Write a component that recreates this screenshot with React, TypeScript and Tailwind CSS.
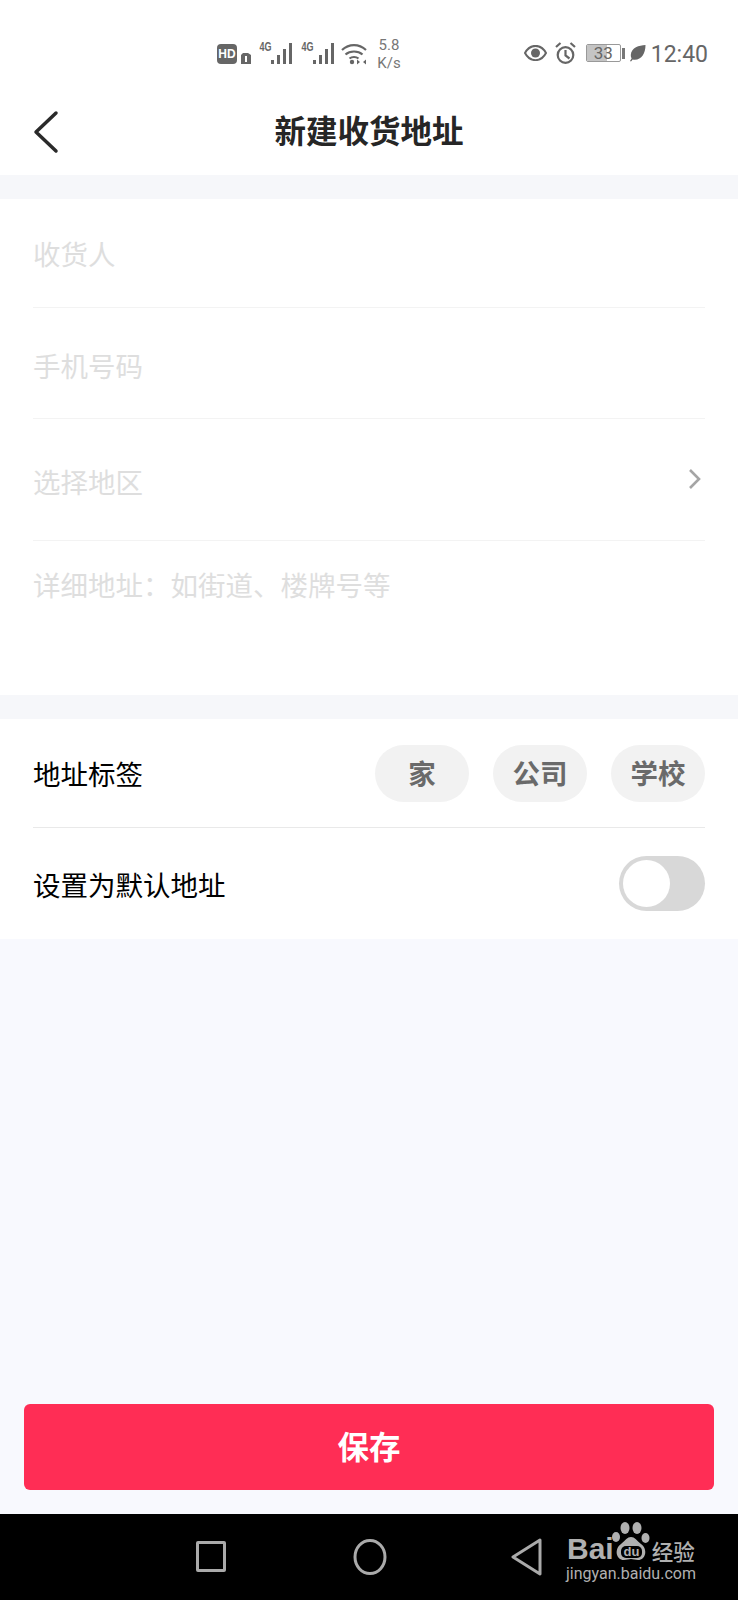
const cjk = '"Noto Sans CJK SC", "Liberation Sans", sans-serif'

const Signal = ({ className }: { className: string }) => (
  <div className={`flex items-start ${className}`}>
    <span className="w-[12px] origin-top scale-x-[0.9] scale-y-[1.35] text-[10px] leading-[8px] font-bold whitespace-nowrap text-[#666]" style={{ fontFamily: '"Liberation Sans", sans-serif' }}>4G</span>
    <svg width="22" height="22" viewBox="0 0 22 22" fill="#666">
      <rect x="0" y="18" width="3" height="4" />
      <rect x="6" y="13" width="3" height="9" />
      <rect x="12" y="7" width="3" height="15" />
      <rect x="18" y="1" width="3" height="21" />
    </svg>
  </div>
)

const StatusBar = () => (
  <div className="flex h-[90px] items-start pt-[38px] text-[#666]">
    <div className="ml-[217px] flex items-start">
      <div className="mt-[6px] flex h-[20px] w-[20px] items-center justify-center rounded-[4px] bg-[#666] text-[12px] leading-none font-bold text-white" style={{ fontFamily: '"Liberation Sans", sans-serif' }}>HD</div>
      <svg width="10" height="11" viewBox="0 0 10 11" className="mt-[15px] ml-[4px]">
        <path d="M2 0h5l3 2v9H0V2z" fill="#666" />
        <rect x="4" y="3" width="2" height="6" fill="#fff" />
      </svg>
      <Signal className="mt-[4px] ml-[8px]" />
      <Signal className="mt-[4px] ml-[8px]" />
      <svg width="26" height="22" viewBox="0 0 26 22" className="mt-[5px] ml-[6px]" fill="none" stroke="#666" strokeWidth="2.200">
        <path d="M1 7c7-6.500 17-6.500 24 0" />
        <path d="M4.500 11.500c4.500-4 12.500-4 17 0" />
        <path d="M8.500 15.500c2.500-2 6.500-2 9 0" />
        <circle cx="11" cy="19" r="2.200" fill="#666" stroke="none" />
        <path d="M16 16.500 19 19l-3 2.500zM25 16.500 22 19l3 2.500z" fill="#666" stroke="none" />
      </svg>
      <div className="-mt-[2px] ml-[10px] w-[24px] text-center text-[15px] leading-[18px] whitespace-nowrap text-[#777]" style={{ fontFamily: 'Roboto, sans-serif' }}>
        5.8<br />K/s
      </div>
    </div>
    <div className="ml-auto mr-[30px] flex items-start">
      <svg width="23" height="16" viewBox="0 0 23 16" className="mt-[7px]">
        <path d="M1 8c5-9.500 16-9.500 21 0-5 9.500-16 9.500-21 0z" fill="none" stroke="#666" strokeWidth="2" />
        <circle cx="11.500" cy="8" r="4.500" fill="#666" />
      </svg>
      <svg width="21" height="22" viewBox="0 0 21 22" className="mt-[4px] ml-[8px]" fill="none" stroke="#666" strokeWidth="2.200">
        <circle cx="10.500" cy="13" r="7.800" />
        <path d="M10.500 8v5.500l4 3" />
        <path d="M1 5l4.500-4M20 5l-4.500-4" />
      </svg>
      <div className="relative mt-[6px] ml-[10px] flex h-[18px] w-[35px] items-center overflow-hidden rounded-[2px] border border-[#999]">
        <div className="h-full w-[20px] bg-[#c4c4c4]" />
        <span className="absolute inset-x-0 text-center text-[17px] leading-[16px] text-[#666]" style={{ fontFamily: 'Roboto, sans-serif' }}>33</span>
      </div>
      <div className="mt-[10px] ml-[1px] h-[11px] w-[3px] bg-[#777]" />
      <svg width="16" height="17" viewBox="0 0 16 17" className="mt-[7px] ml-[5px]">
        <path d="M15.500 0C9 .5 1.500 2 .8 10c-.1 1.300.2 2.500.8 3.500L0 16l1 .6 1.700-2C11 16 15.500 9 15.500 0z" fill="#666" />
      </svg>
      <span className="mt-[6px] ml-[5px] text-[23px] leading-[22px] text-[#666]" style={{ fontFamily: 'Roboto, sans-serif' }}>12:40</span>
    </div>
  </div>
)

const FieldRow = ({ label, rowClass, divider, arrow }: { label: string; rowClass: string; divider: boolean; arrow?: boolean }) => (
  <div className={`mx-[33px] flex justify-between ${rowClass} ${divider ? 'border-b border-[#f3f3f3]' : ''}`}>
    <span className="text-[27.5px] leading-[40px] text-[#dedede]">{label}</span>
    {arrow && (
      <svg width="14" height="22" viewBox="0 0 14 22" fill="none" stroke="#a5a5a5" strokeWidth="2.600" className="mr-[3px] -mt-[3px]">
        <path d="M2 2l9 9-9 9" />
      </svg>
    )}
  </div>
)

const Chip = ({ children }: { children: string }) => (
  <div className="flex h-[57px] w-[94px] items-center justify-center rounded-full bg-[#f2f2f2] text-[27.5px] font-bold text-[#6a6a6a]">{children}</div>
)

export default function App() {
  return (
    <div className="flex h-[1600px] w-[738px] flex-col overflow-hidden bg-[#f8f9fe]" style={{ fontFamily: cjk }}>
      <div className="bg-white">
        <StatusBar />
        <div className="relative flex h-[85px] items-center justify-center pb-[5px]">
          <svg width="26" height="44" viewBox="0 0 26 44" fill="none" stroke="#2a2a2a" strokeWidth="3.500" strokeLinecap="round" strokeLinejoin="round" className="absolute left-[33px] top-[20px]">
            <path d="M23 3 3 22l20 19" />
          </svg>
          <span className="text-[31.5px] leading-none font-bold text-[#262626]">新建收货地址</span>
        </div>
      </div>

      <div className="h-[24px] bg-[#f6f7fa]" />

      <div className="h-[496px] bg-white">
        <FieldRow label="收货人" rowClass="h-[109px] items-center" divider />
        <FieldRow label="手机号码" rowClass="h-[111px] items-center pt-[3px]" divider />
        <FieldRow label="选择地区" rowClass="h-[122px] items-center pt-[2px]" divider arrow />
        <FieldRow label="详细地址：如街道、楼牌号等" rowClass="items-start pt-[23px]" divider={false} />
      </div>

      <div className="h-[24px] bg-[#f6f7fa]" />

      <div className="h-[220px] bg-white">
        <div className="mx-[33px] flex h-[109px] items-center justify-between border-b border-[#e9e9e9]">
          <span className="mt-[1px] text-[27.5px] text-black">地址标签</span>
          <div className="flex gap-[24px]">
            <Chip>家</Chip>
            <Chip>公司</Chip>
            <Chip>学校</Chip>
          </div>
        </div>
        <div className="mx-[33px] flex h-[110px] items-center justify-between">
          <span className="mt-[3px] text-[27.5px] text-black">设置为默认地址</span>
          <div className="flex h-[55px] w-[86px] items-center rounded-full bg-[#d8d8d8] pl-[4px]">
            <div className="h-[47px] w-[47px] rounded-full bg-white" />
          </div>
        </div>
      </div>

      <div className="flex-1" />

      <div className="mx-[24px] mb-[24px] flex h-[86px] items-center justify-center rounded-[6px] bg-[#ff2d55] pb-[3px] text-[31.5px] font-bold text-white">保存</div>

      <div className="relative flex h-[86px] items-center bg-black">
        <div className="ml-[196px] mt-[-1px] h-[31px] w-[30px] rounded-[2px] border-[3px] border-[#aaa]" />
        <svg width="34" height="38" viewBox="0 0 34 38" fill="none" stroke="#aaa" strokeWidth="3" className="ml-[127px]">
          <ellipse cx="17" cy="19" rx="15" ry="16.500" />
        </svg>
        <svg width="32" height="38" viewBox="0 0 32 38" fill="none" stroke="#aaa" strokeWidth="3" strokeLinejoin="round" className="ml-[124px]">
          <path d="M29 2 2 19l27 17z" />
        </svg>
        <div className="absolute top-[8px] left-[566px] text-[#b0b0b0]">
          <div className="flex h-[38px] items-end">
            <span className="ml-[1px] text-[30px] leading-[22px] font-bold" style={{ fontFamily: '"Liberation Sans", sans-serif' }}>Bai</span>
            <svg width="38" height="38" viewBox="0 0 38 38" fill="#b0b0b0" className="-ml-[2px]">
              <ellipse cx="13" cy="6" rx="4.500" ry="6" />
              <ellipse cx="25" cy="6" rx="4.500" ry="6" />
              <ellipse cx="4" cy="15" rx="4" ry="5" />
              <ellipse cx="33.500" cy="16" rx="4" ry="5" />
              <path d="M19 15c4 0 5 3 10 7 7 5 5 16-3 16-3 0-5-1-7-1s-4 1-7 1C4 38 2 27 9 22c5-4 6-7 10-7z" />
              <rect x="9" y="24" width="21" height="12" rx="5" fill="#000" />
              <text x="19.500" y="34" textAnchor="middle" fontSize="13" fontWeight="700" fill="#b0b0b0" fontFamily="Liberation Sans">du</text>
            </svg>
            <span className="-mb-[2px] ml-[2px] text-[21.5px] leading-[22px] font-medium">经验</span>
          </div>
          <div className="mt-[5px] text-[16px] leading-[18px]" style={{ fontFamily: 'Roboto, sans-serif' }}>jingyan.baidu.com</div>
        </div>
      </div>
    </div>
  )
}
